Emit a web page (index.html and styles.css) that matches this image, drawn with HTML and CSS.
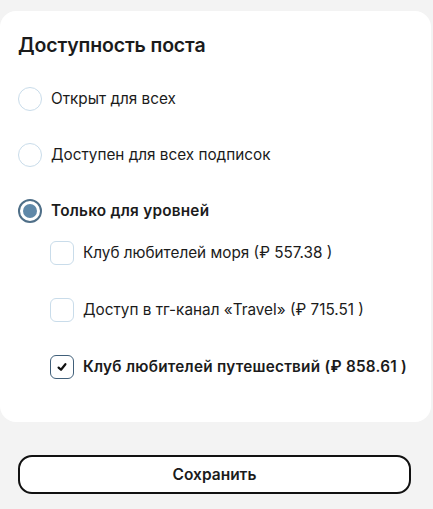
FILE: index.html
```html
<!DOCTYPE html>
<html lang="ru">
<head>
  <meta charset="UTF-8" />
  <meta name="viewport" content="width=device-width, initial-scale=1.0" />
  <title>Доступность поста</title>
  <link rel="stylesheet" href="styles.css">
</head>
<body>
  <!-- Access card -->
  <section class="card">
    <h2 class="card-title">Доступность поста</h2>

    <div class="options">
      <label class="option">
        <span class="radio"></span>
        <span class="label">Открыт для всех</span>
      </label>
      <label class="option">
        <span class="radio"></span>
        <span class="label">Доступен для всех подписок</span>
      </label>
      <label class="option">
        <span class="radio checked"></span>
        <span class="label bold">Только для уровней</span>
      </label>
    </div>

    <!-- Levels -->
    <div class="levels">
      <label class="option">
        <span class="check"></span>
        <span class="label">Клуб любителей моря (₽ 557.38 )</span>
      </label>
      <label class="option">
        <span class="check"></span>
        <span class="label">Доступ в тг-канал «Travel» (₽ 715.51 )</span>
      </label>
      <label class="option">
        <span class="check checked">
          <svg width="12" height="12" viewBox="0 0 12 12"><path d="M2.6 6.6 L5 8.8 L9.4 3.2" fill="none" stroke="#111" stroke-width="2.2" stroke-linecap="round" stroke-linejoin="round"/></svg>
        </span>
        <span class="label bold">Клуб любителей путешествий (₽ 858.61 )</span>
      </label>
    </div>
  </section>

  <!-- Save -->
  <div class="actions">
    <button class="save-btn">Сохранить</button>
  </div>
</body>
</html>
```

FILE: styles.css
```css
/* ===== Base ===== */
* { box-sizing: border-box; margin: 0; padding: 0; }
body {
  background: #f3f3f3;
  color: #1b1b1b;
  font-family: Inter, "Noto Sans", sans-serif;
  padding-top: 11px;
}

/* ===== Card ===== */
.card {
  width: 431px;
  background: #fff;
  border-radius: 16px;
  padding: 22px 18px 43px;
}
.card-title {
  font-size: 19.5px;
  font-weight: 600;
  line-height: 24px;
  letter-spacing: -0.15px;
}

/* ===== Options ===== */
.options {
  display: flex;
  flex-direction: column;
  gap: 32px;
  margin-top: 30px;
}
.levels {
  display: flex;
  flex-direction: column;
  gap: 33px;
  margin-top: 18px;
  padding-left: 32px;
}
.option {
  display: flex;
  align-items: center;
  gap: 9px;
  height: 24px;
  font-size: 15.3px;
}
.label { line-height: 20px; }
.label.bold { font-weight: 600; letter-spacing: 0.25px; }

.radio {
  width: 24px;
  height: 24px;
  border: 1px solid #c9dcea;
  border-radius: 50%;
  display: flex;
  justify-content: center;
  align-items: center;
}
.radio.checked { border: 2px solid #4f6f88; }
.radio.checked::after {
  content: "";
  width: 14px;
  height: 14px;
  border-radius: 50%;
  background: #5f88a8;
}

.check {
  width: 24px;
  height: 24px;
  border: 1px solid #c9dcea;
  border-radius: 6px;
  display: flex;
  justify-content: center;
  align-items: center;
}
.check.checked { border: 1.5px solid #41607a; }

/* ===== Actions ===== */
.actions { padding: 33px 22px 0 18px; }
.save-btn {
  width: 100%;
  height: 39px;
  background: #fff;
  border: 2px solid #111;
  border-radius: 14px;
  font-family: inherit;
  font-size: 15.5px;
  font-weight: 600;
  color: #1b1b1b;
}
```
